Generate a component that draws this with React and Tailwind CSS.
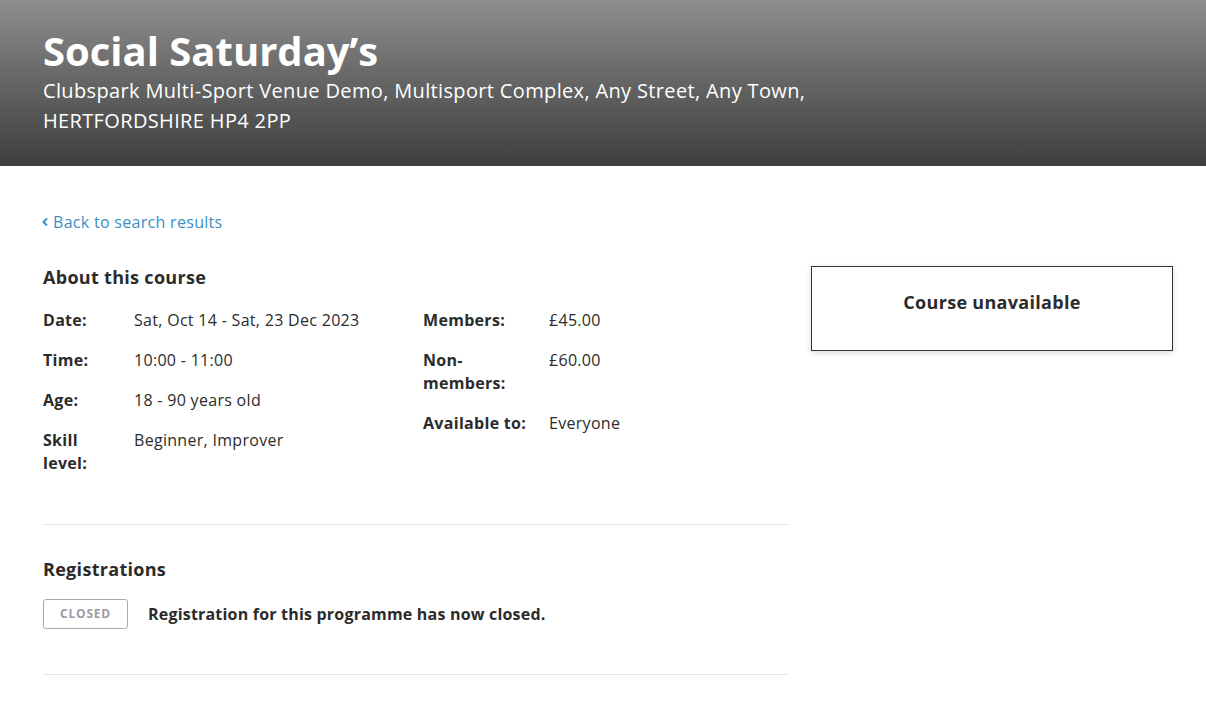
const font = { fontFamily: '"Open Sans", Lato, sans-serif' };

function Row({ label, value, labelWidth }) {
  return (
    <div className="flex items-start">
      <div className={`${labelWidth} shrink-0 font-bold`}>{label}</div>
      <div>{value}</div>
    </div>
  );
}

export default function App() {
  return (
    <div className="min-h-[702px] bg-white text-[#2b2b2b] tracking-[0.3px]" style={font}>
      {/* Header */}
      <header className="h-[166px] bg-gradient-to-b from-[#8e8e8e] to-[#3e3e3e] pl-[43px] pt-[27px] text-white">
        <h1 className="text-[40px] font-bold leading-[48px] tracking-normal">Social Saturday’s</h1>
        <p className="mt-[1px] w-[800px] text-[20px] leading-[30px] tracking-[0.35px]">
          Clubspark Multi-Sport Venue Demo, Multisport Complex, Any Street, Any Town, HERTFORDSHIRE HP4 2PP
        </p>
      </header>

      <main className="flex pl-[43px] pr-[33px] pt-[44px]">
        <div className="w-[745px] shrink-0">
          <a className="-ml-[2px] flex items-center gap-[4px] text-[16px] leading-[24px] text-[#3b8ec8]">
            <svg width="8" height="10" viewBox="0 0 8 10" fill="none">
              <path d="M6 1.5L2.5 5L6 8.5" stroke="currentColor" strokeWidth="2" />
            </svg>
            Back to search results
          </a>

          <h2 className="mt-[31px] text-[18px] font-bold leading-[24px]">About this course</h2>

          <div className="mt-[20px] flex text-[16px] leading-[23px]">
            <div className="flex w-[380px] flex-col gap-[17px]">
              <Row labelWidth="w-[91px]" label="Date:" value="Sat, Oct 14 - Sat, 23 Dec 2023" />
              <Row labelWidth="w-[91px]" label="Time:" value="10:00 - 11:00" />
              <Row labelWidth="w-[91px]" label="Age:" value="18 - 90 years old" />
              <Row labelWidth="w-[91px]" label={<>Skill<br />level:</>} value="Beginner, Improver" />
            </div>
            <div className="flex flex-col gap-[17px]">
              <Row labelWidth="w-[126px]" label="Members:" value="£45.00" />
              <Row labelWidth="w-[126px]" label={<>Non-<br />members:</>} value="£60.00" />
              <Row labelWidth="w-[126px]" label="Available to:" value="Everyone" />
            </div>
          </div>

          <div className="mt-[49px] border-t border-[#e3e3e3]" />

          <h2 className="mt-[32px] text-[18px] font-bold leading-[24px]">Registrations</h2>
          <div className="mt-[18px] flex items-center gap-[20px]">
            <span className="flex h-[30px] w-[85px] items-center justify-center rounded-[3px] border border-[#a8a8b4] text-[12px] font-bold tracking-[0.8px] text-[#9b9ba6]">
              CLOSED
            </span>
            <span className="text-[16px] font-bold tracking-[0.2px]">Registration for this programme has now closed.</span>
          </div>

          <div className="mt-[45px] border-t border-[#e3e3e3]" />
        </div>

        <div className="ml-[23px] mt-[56px] shrink-0">
          <div className="flex h-[85px] w-[362px] items-start justify-center border border-[#333] pt-[23px] text-[18px] font-bold leading-[24px] shadow-[0_2px_6px_rgba(0,0,0,0.15)]">
            Course unavailable
          </div>
        </div>
      </main>
    </div>
  );
}
